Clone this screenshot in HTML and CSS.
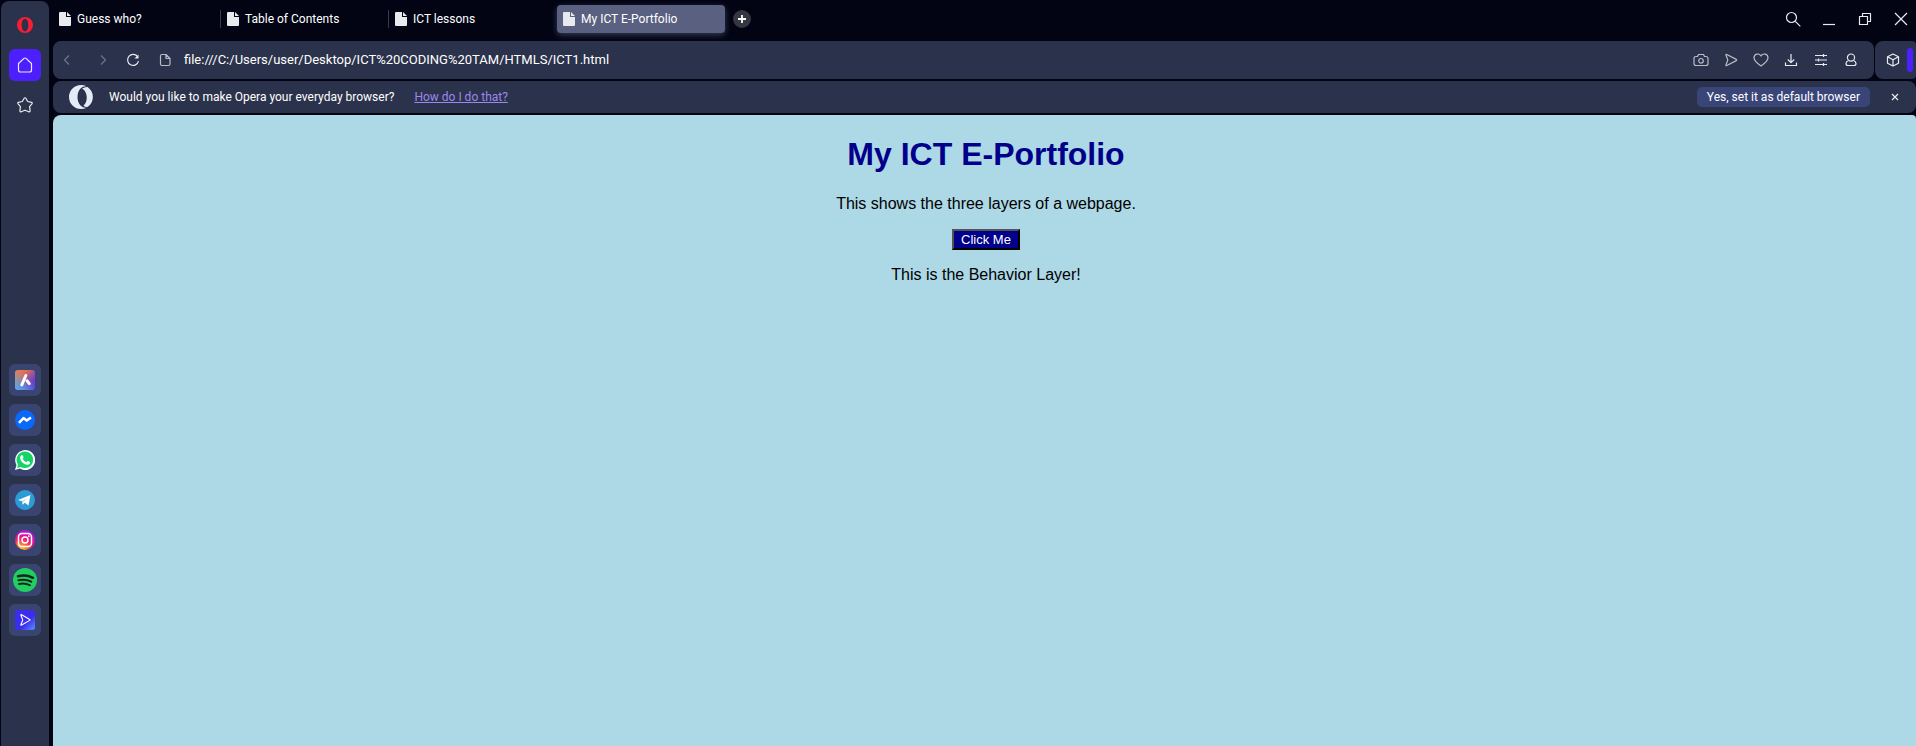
FILE: index.html
```html
<!DOCTYPE html>
<html lang="en">
<head>
<meta charset="utf-8">
<title>My ICT E-Portfolio</title>
<link rel="stylesheet" href="styles.css">
</head>
<body>
<svg class="defs" aria-hidden="true">
  <defs>
    <symbol id="file" viewBox="0 0 12 14"><path d="M1 0h6v4.500Q7 5 7.500 5H12v8a1 1 0 0 1-1 1H1a1 1 0 0 1-1-1V1a1 1 0 0 1 1-1zM8 0l4 4H8z"/></symbol>
    <symbol id="opera" viewBox="0 0 24 24"><path fill-rule="evenodd" d="M12 0a12 12 0 1 0 0 24a12 12 0 1 0 0-24zM12 2.500c3 0 5 4.200 5 9.500s-2 9.500-5 9.500s-5-4.200-5-9.500s2-9.500 5-9.500z"/></symbol>
    <linearGradient id="aria" x1="0" y1="0" x2="1" y2="1"><stop offset="0" stop-color="#ef7a48"/><stop offset=".3" stop-color="#e0704f"/><stop offset=".65" stop-color="#7d45c0"/><stop offset="1" stop-color="#4a2ed0"/></linearGradient>
    <linearGradient id="ariaBlue" x1="0" y1="1" x2=".6" y2=".3"><stop offset="0" stop-color="#4fb4f2"/><stop offset="1" stop-color="#58b4ec" stop-opacity="0"/></linearGradient>
    <radialGradient id="insta" cx=".3" cy="1" r="1"><stop offset="0" stop-color="#ffd04a"/><stop offset=".3" stop-color="#fb7a32"/><stop offset=".6" stop-color="#ef1580"/><stop offset="1" stop-color="#b012e0"/></radialGradient>
    <linearGradient id="player" x1="0" y1="0" x2="1" y2="1"><stop offset=".6" stop-color="#3b2df0"/><stop offset="1" stop-color="#5a94ff"/></linearGradient>
  </defs>
</svg>
<div class="browser">
  <nav class="sidebar" aria-label="Sidebar">
    <button class="side" aria-label="Opera menu"><svg class="i16 red"><use href="#opera"/></svg></button>
    <button class="side home" aria-label="Home"><svg class="i16 line" viewBox="0 0 16 16"><path d="M1.500 6.500L7 1.400q1-.8 2 0L14.500 6.500V13q0 2-2 2h-9q-2 0-2-2z"/></svg></button>
    <button class="side" aria-label="Bookmarks"><svg class="i16 line" viewBox="0 0 16 16"><path d="M7.200 1.200q.8-.9 1.600 0l1.900 3.300 3.800.8q1 .4.600 1.300l-2.500 3 .5 4.300q-.2 1.200-1.300.9L8 13.200l-3.800 1.600q-1.100.3-1.300-.9l.5-4.300-2.500-3q-.4-.9.600-1.300l3.800-.8z"/></svg></button>
    <div class="apps">
      <button class="side app" aria-label="Aria"><svg class="i20" viewBox="0 0 20 20"><rect width="20" height="20" rx="3" fill="url(#aria)"/><rect width="20" height="20" rx="3" fill="url(#ariaBlue)"/><path d="M10.800 5.500l-4 9.300M12 10.800l2.300 2.800" fill="none" stroke="#fff" stroke-width="3" stroke-linecap="round"/></svg></button>
      <button class="side app" aria-label="Messenger"><svg class="i20" viewBox="0 0 20 20"><circle cx="10" cy="10" r="10" fill="#0a68fb"/><path d="M4 12.800l4.500-4.700 3.200 2.500L16 7.500" fill="none" stroke="#fff" stroke-width="2.500" stroke-linejoin="round"/></svg></button>
      <button class="side app" aria-label="WhatsApp"><svg class="i20" viewBox="0 0 20 20"><path d="M0 20l1.500-5A10 10 0 1 1 5 18.600z" fill="#fff"/><path d="M2 18l1-3.500A8.300 8.300 0 1 1 5.700 17z" fill="#12d467"/><path d="M6.200 5.200q1.200-.8 1.700.5l.6 1.500q0 .6-.9 1.500 1.300 2.500 3.800 3.500l1.100-1.100q.5-.3 2 .6 1 .5.500 1.500-1 2-3.200 1.600Q6.300 13.500 5.200 8.500q-.4-2 1-3.300z" fill="#fff"/></svg></button>
      <button class="side app" aria-label="Telegram"><svg class="i20" viewBox="0 0 20 20"><circle cx="10" cy="10" r="10" fill="#2d9bd6"/><path d="M3 10L15.500 5l-2 10.500-3.700-2.700-2 2-.8-3.500z" fill="#fff"/><path d="M7 11.300l5.500-3.800-4.200 4.500-.5 2.800z" fill="#b9d6e8"/></svg></button>
      <button class="side app" aria-label="Instagram"><svg class="i20" viewBox="0 0 20 20"><circle cx="10" cy="10" r="10" fill="url(#insta)"/><g fill="none" stroke="#fff" stroke-width="1.500"><rect x="3.500" y="3.500" width="13" height="13" rx="3.500"/><circle cx="10" cy="10" r="3"/></g><circle cx="13.800" cy="6.200" r=".9" fill="#fff"/></svg></button>
      <button class="side app" aria-label="Spotify"><svg class="i24" viewBox="0 0 24 24"><circle cx="12" cy="12" r="12" fill="#21cf5f"/><g fill="none" stroke="#10271f" stroke-linecap="round"><path d="M5 8.300q8-2 15 1.500" stroke-width="2.500"/><path d="M5.500 12.300q7-1.700 12.700 1.400" stroke-width="2.100"/><path d="M6 16q6-1.400 11 1.300" stroke-width="1.800"/></g></svg></button>
      <button class="side app" aria-label="Player"><svg class="i20" viewBox="0 0 20 20"><rect width="20" height="20" rx="3" fill="url(#player)"/><path d="M6 5.500q-.5-1.200.7-.7l8 4.600q.8.500 0 1L6.700 15q-1.200.5-.7-.7l1.500-3.600q.4-.7 0-1.400z" fill="none" stroke="#fff" stroke-width="1.100"/></svg></button>
    </div>
  </nav>
  <div class="main">
    <header class="tabs">
      <button class="tab"><svg class="file"><use href="#file"/></svg>Guess who?</button>
      <button class="tab"><svg class="file"><use href="#file"/></svg>Table of Contents</button>
      <button class="tab"><svg class="file"><use href="#file"/></svg>ICT lessons</button>
      <button class="tab active"><svg class="file"><use href="#file"/></svg>My ICT E-Portfolio</button>
      <button class="new" aria-label="New tab"><svg viewBox="0 0 18 18"><circle cx="9" cy="9" r="9" fill="#34373f"/><path d="M9 5v8M5 9h8" stroke="#fff" stroke-width="1.800"/></svg></button>
      <div class="window">
        <button aria-label="Search tabs"><svg class="i16 line" viewBox="0 0 16 16"><circle cx="6.500" cy="6.500" r="5"/><path d="M10.300 10.300l5 5"/></svg></button>
        <button aria-label="Minimize"><svg class="i16 line" viewBox="0 0 16 16"><path d="M2 13.500h12"/></svg></button>
        <button aria-label="Restore"><svg class="i16 line" viewBox="0 0 16 16"><path d="M2.500 5.500h8v8h-8zM5.500 5V2.500h8v8H11"/></svg></button>
        <button aria-label="Close"><svg class="i16 line" viewBox="0 0 16 16"><path d="M2 2l12 12M14 2L2 14"/></svg></button>
      </div>
    </header>
    <div class="toolrow">
      <div class="toolbar">
        <div class="nav">
          <button class="dim" aria-label="Back"><svg class="i16 line" viewBox="0 0 16 16"><path d="M10 3.500L5.500 8l4.500 4.500"/></svg></button>
          <button class="dim" aria-label="Forward"><svg class="i16 line" viewBox="0 0 16 16"><path d="M6 3.500L10.500 8 6 12.500"/></svg></button>
          <button aria-label="Reload"><svg class="i16 line" viewBox="0 0 16 16"><path d="M12.800 5A5.500 5.500 0 1 0 13.500 9"/><path d="M13.500 2.500v4h-4z" fill="#e9eaf0" stroke="none"/></svg></button>
        </div>
        <svg class="i16 line soft" viewBox="0 0 16 16"><path d="M5 2.500h4l4 4V12q0 1.500-1.500 1.500H5Q3.500 13.500 3.500 12V4Q3.500 2.500 5 2.500zM9 2.500v4h4"/></svg>
        <input class="url" aria-label="Address" value="file:///C:/Users/user/Desktop/ICT%20CODING%20TAM/HTMLS/ICT1.html">
        <div class="actions">
          <button class="soft" aria-label="Snapshot"><svg class="i16 line" viewBox="0 0 16 16"><path d="M3 4.500h1.500L5.500 2.500h5l1 2H13q2 0 2 2v5q0 2-2 2H3q-2 0-2-2v-5q0-2 2-2z"/><circle cx="8" cy="8.800" r="2.300"/></svg></button>
          <button class="soft" aria-label="Player"><svg class="i16 line" viewBox="0 0 16 16"><path d="M3 3.200q-.4-1.200.8-.7l9.500 4.900q.8.600 0 1.200l-9.500 4.900q-1.200.5-.8-.7l1.600-4q.3-.8 0-1.600z"/></svg></button>
          <button class="soft" aria-label="Favorites"><svg class="i16 line" viewBox="0 0 16 16"><path d="M8 14Q1 9 1 5.700C1 2 6 .5 8 4c2-3.500 7-2 7 1.700Q15 9 8 14z"/></svg></button>
          <button aria-label="Downloads"><svg class="i16 line" viewBox="0 0 16 16"><path d="M8 2v8.500M4.800 7.500L8 10.700l3.200-3.200M2.500 10.500v3h11v-3"/></svg></button>
          <button aria-label="Easy setup"><svg class="i16 line" viewBox="0 0 16 16"><path d="M2 3.500h12M2 8h12M2 12.500h12M10.500 2v3M5.500 6.500v3M10.500 11v3"/></svg></button>
          <button aria-label="Profile"><svg class="i16 line" viewBox="0 0 16 16"><circle cx="8" cy="5.600" r="3.600"/><path d="M5.500 8.500Q3 9.500 3 11.500q0 2 2 2h6q2 0 2-2 0-2-2.500-3"/></svg></button>
        </div>
      </div>
      <div class="extra">
        <button aria-label="Extensions"><svg class="i16 line" viewBox="0 0 16 16"><path d="M8 2l5.500 2.800v6.400L8 14l-5.500-2.800V4.800zM2.500 4.800L8 7.800l5.500-3M8 7.800V14"/></svg></button>
        <span class="accent"></span>
      </div>
    </div>
    <div class="infobar">
      <svg class="i24 pale" viewBox="0 0 24 24"><path d="M12 0A12 12 0 0 0 12 24Q15 24 17.500 22.700Q14 23 11.500 20.500C7.500 16.500 7.500 7.500 11.500 3.500Q14 1 17.500 1.300Q15 0 12 0z"/><path d="M13 3.500Q16 1.700 18.500 2A12 12 0 0 1 18.500 22Q16 22.300 14.500 20.500C19.500 16.500 18.500 6 13 3.500z"/></svg>
      <span class="ask">Would you like to make Opera your everyday browser?</span>
      <a href="#how">How do I do that?</a>
      <button class="yes">Yes, set it as default browser</button>
      <button class="dismiss" aria-label="Dismiss"><svg class="i16 line" viewBox="0 0 16 16"><path d="M5 5l6 6M11 5l-6 6"/></svg></button>
    </div>
    <main class="page">
      <h1>My ICT E-Portfolio</h1>
      <p>This shows the three layers of a webpage.</p>
      <button class="click">Click Me</button>
      <p>This is the Behavior Layer!</p>
    </main>
  </div>
</div>
</body>
</html>
```
FILE: styles.css
```css
* { box-sizing: border-box; }
body {
  margin: 0;
  background: #020414;
  color: #fff;
  font: 12px/16px Roboto, sans-serif;
}
button { border: 0; padding: 0; background: none; color: inherit; font: inherit; }
svg { display: block; flex: none; }
.defs { position: absolute; width: 0; height: 0; }
.i16 { width: 16px; height: 16px; }
.i20 { width: 20px; height: 20px; }
.i24 { width: 24px; height: 24px; }
.line { fill: none; stroke: #e9eaf0; stroke-width: 1.2; stroke-linejoin: round; }
.red { fill: #fa1e35; }
.pale { fill: #e4ebf6; }
.soft { opacity: 0.75; }
.dim { opacity: 0.35; }

.browser { display: flex; gap: 4px; min-height: 100vh; padding-left: 1px; }
.sidebar {
  display: flex;
  flex-direction: column;
  align-items: center;
  width: 48px;
  margin-top: 1px;
  padding-top: 8px;
  gap: 8px;
  background: #2b324b;
  border-radius: 8px 8px 0 0;
}
.side { display: grid; place-items: center; width: 32px; height: 32px; border-radius: 6px; }
.home { background: #4d1fff; }
.apps { display: grid; gap: 8px; margin-top: 235px; }
.app { background: #394470; }

.main { display: flex; flex-direction: column; flex: 1; min-width: 0; }
.tabs { display: flex; align-items: center; height: 41px; padding-bottom: 3px; }
.tab {
  display: flex;
  align-items: center;
  gap: 6px;
  width: 168px;
  height: 28px;
  padding-left: 6px;
  border-radius: 4px;
  background: linear-gradient(#363a4b, #363a4b) right / 1px 18px no-repeat;
}
.tab.active { background: #5a6080; box-shadow: 0 2px 6px #5a608099; }
.tab:nth-child(3) { background: none; }
.file { width: 12px; height: 14px; fill: #e9eaee; }
.new { width: 18px; height: 18px; margin-left: 8px; }
.window { display: flex; gap: 20px; margin-left: auto; padding-right: 7px; }

.toolrow { display: flex; gap: 1px; height: 38px; }
.toolbar, .extra, .infobar { display: flex; align-items: center; background: #2b324b; border-radius: 8px; }
.toolbar { flex: 1; padding: 0 15px 0 6px; }
.nav { display: flex; gap: 14px; margin-right: 16px; }
.nav button:first-child { margin-right: 6px; }
.url {
  flex: 1;
  min-width: 0;
  margin-left: 11px;
  padding: 0;
  border: 0;
  outline: 0;
  background: none;
  color: #fff;
  font: 13px/18px Roboto, sans-serif;
}
.actions { display: flex; gap: 14px; }
.extra { justify-content: space-between; width: 41px; padding: 0 3px 0 10px; border-radius: 8px 4px 4px 8px; }
.accent { width: 6px; height: 24px; border-radius: 3px; background: #4d1fff; }

.infobar { height: 32px; margin: 2px 0; padding: 0 13px 0 16px; }
.ask { margin: 0 20px 0 16px; }
.infobar a { color: #9d87f0; text-decoration: underline; }
.yes { height: 20px; margin-left: auto; padding: 0 10px; border-radius: 5px; background: #394577; line-height: 20px; }
.dismiss { margin-left: 17px; }

.page {
  flex: 1;
  padding-left: 3px;
  background: #add8e6;
  color: #000;
  border-radius: 8px 4px 0 0;
  text-align: center;
  font: 16px/18px "Liberation Sans", Arial, sans-serif;
}
.page h1 { margin: 21px 0 22px; color: #00008b; font-size: 32px; line-height: 37px; }
.page p { margin: 16px 0; }
.click {
  padding: 1px 7px;
  border: 2px outset #000;
  background: #00008b;
  color: #fff;
  font-size: 13px;
  line-height: 15px;
}
```
